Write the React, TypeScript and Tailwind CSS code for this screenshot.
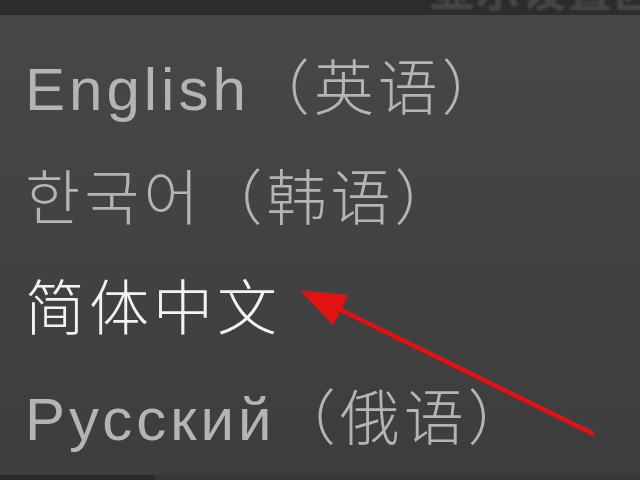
const rows = [
  { label: "English（英语）", active: false },
  { label: "한국어（韩语）", active: false },
  { label: "简体中文", active: true },
  { label: "Русский（俄语）", active: false },
];

export default function App() {
  return (
    <div
      className="relative flex h-[480px] w-[640px] flex-col overflow-hidden bg-[#424242]"
      style={{ fontFamily: '"Liberation Sans", "Noto Sans CJK SC", sans-serif' }}
    >
      {/* top toolbar, mostly cut off */}
      <div className="flex h-[15px] shrink-0 justify-end overflow-hidden bg-[#2c2c2c]">
        <span className="mr-[-20px] mt-[-30px] text-[44px] font-bold leading-[44px] tracking-[2px] text-[#474747] blur-[1px]">
          显示设置区
        </span>
      </div>

      {/* language menu */}
      <div className="flex flex-1 flex-col bg-gradient-to-b from-[#474747] to-[#3d3d3d] pl-[25px] pt-[20px]">
        {rows.map((row) => (
          <div
            key={row.label}
            className={
              row.active
                ? "h-[110px] whitespace-nowrap text-[60px] font-light leading-[110px] tracking-[4px] text-[#f2f2f2] blur-[0.5px]"
                : "h-[110px] whitespace-nowrap text-[60px] font-light leading-[110px] tracking-[4px] text-[#b4b4b4] blur-[0.6px]"
            }
          >
            {row.label}
          </div>
        ))}
      </div>

      {/* bottom strip */}
      <div className="flex h-[7px] shrink-0">
        <div className="w-[155px] bg-[#2a2a2a]" />
        <div className="flex-1 bg-[#383838]" />
      </div>

      {/* red callout arrow */}
      <svg className="absolute inset-0" width="640" height="480" viewBox="0 0 640 480">
        <line x1="592" y1="433" x2="335" y2="307" stroke="#e31212" strokeWidth="4.5" strokeLinecap="round" />
        <polygon points="300,290 348,295 333,325" fill="#e31212" />
      </svg>
    </div>
  );
}
